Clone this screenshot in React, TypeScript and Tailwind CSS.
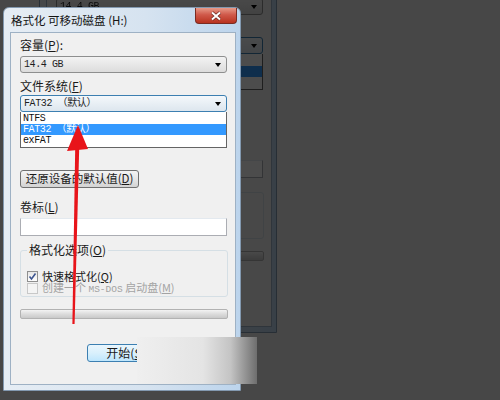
const ui = "font-['Noto_Sans_CJK_SC','Liberation_Sans',sans-serif]"
const mono = "font-['Liberation_Mono','Noto_Sans_CJK_SC',monospace]"

function DropArrow() {
  return <span className="w-0 h-0 border-x-[3.5px] border-x-transparent border-t-[4px] border-t-black" />
}

function ComboBox({ value, focused }: { value: string; focused?: boolean }) {
  return (
    <div
      className={`h-[17px] w-[207px] flex items-center justify-between pl-[3px] pr-[5px] rounded-[3px] border ${
        focused
          ? 'border-[#3c7fb1] bg-[linear-gradient(#f4f8fb,#dde6ee)]'
          : 'border-[#8e8f8f] bg-[linear-gradient(#f3f3f3,#dcdcdc)]'
      }`}
    >
      <span className={`${mono} text-[10px] leading-none tracking-[-0.4px] text-[#1e1e1e]`}>{value}</span>
      <DropArrow />
    </div>
  )
}

function ListItem({ label, selected }: { label: string; selected?: boolean }) {
  return (
    <div
      className={`h-[11px] flex items-center pl-[2px] ${mono} text-[10px] leading-none tracking-[-0.4px] ${
        selected ? 'bg-[#3399ff] text-white' : 'text-[#111]'
      }`}
    >
      {label}
    </div>
  )
}

function CheckBox({ checked, disabled }: { checked?: boolean; disabled?: boolean }) {
  return (
    <span
      className={`w-[11px] h-[11px] shrink-0 flex items-center justify-center border ${
        disabled ? 'border-[#c8c8c8] bg-[#f4f4f4]' : 'border-[#8f8f8f] bg-[linear-gradient(#e6e6e6,#ffffff)]'
      }`}
    >
      {checked && (
        <svg width="9" height="9" viewBox="0 0 9 9">
          <path d="M1.5 4.5 L3.5 7 L7.5 1.5" fill="none" stroke="#3d5590" strokeWidth="1.6" />
        </svg>
      )}
    </span>
  )
}

// `bare` draws only the frame and controls, for the window sitting behind
function FormatDialog({ bare }: { bare?: boolean }) {
  const t = (s: React.ReactNode) => (bare ? null : s)
  return (
    <div className="w-[238px] h-[384px] flex flex-col rounded-t-[6px] border border-[#8399b0] bg-[linear-gradient(to_right,#e6edf4,#d6e3f0_60%,#bcd4ec)]">
      {/* title bar */}
      <div className="h-[24px] flex items-start justify-between pl-[7px]">
        <span className={`${ui} mt-[5px] text-[11.5px] leading-[14px] text-[#141414]`}>{t('格式化 可移动磁盘 (H:)')}</span>
        <div className="w-[42px] h-[16px] mr-[3px] flex items-center justify-center rounded-b-[4px] border border-t-0 border-[#7a2b22] bg-[linear-gradient(#e79a88,#d0594a_45%,#b8321f)]">
          <svg width="12" height="10" viewBox="0 0 12 10">
            <path d="M2 1.5 L10 8.5 M10 1.5 L2 8.5" stroke="#6b2a22" strokeWidth="3.4" />
            <path d="M2 1.5 L10 8.5 M10 1.5 L2 8.5" stroke="#ffffff" strokeWidth="2" />
          </svg>
        </div>
      </div>

      {/* client area */}
      <div className={`${ui} flex-1 ml-[6px] mr-[4px] mb-[5px] border border-[#9eb1c4] bg-[#f0f0f0] pl-[9px] pt-[5px] text-[#1a1a1a]`}>
        <div className="h-[14px] text-[12px] leading-[14px]">{t(<>容量(<span className="underline">P</span>):</>)}</div>
        <div className="mt-[4px]">
          <ComboBox value="14.4 GB" />
        </div>

        <div className="mt-[6px] h-[14px] text-[12px] leading-[14px]">{t(<>文件系统(<span className="underline">F</span>)</>)}</div>
        <div className="mt-[2px]">
          <ComboBox value={bare ? '' : 'FAT32 （默认）'} focused />
        </div>
        <div className="w-[207px] h-[36px] border border-t-0 border-[#646464] bg-white pt-[1px]">
          <ListItem label={bare ? '' : 'NTFS'} />
          <ListItem label={bare ? '' : 'FAT32 （默认）'} selected />
          <ListItem label={bare ? '' : 'exFAT'} />
        </div>

        <button className="mt-[22px] h-[18px] w-[119px] flex items-center justify-center rounded-[3px] border border-[#707070] bg-[linear-gradient(#f4f4f4,#e6e6e6_50%,#d3d3d3)] text-[11.5px] leading-none text-[#1a1a1a]">
          {t(<>还原设备的默认值(<span className="underline">D</span>)</>)}
        </button>

        <div className="mt-[12px] h-[14px] text-[12px] leading-[14px]">{t(<>卷标(<span className="underline">L</span>)</>)}</div>
        <div className="mt-[4px] w-[207px] h-[18px] border border-[#abadb3] border-t-[#e3e9ef] bg-white" />

        <fieldset className="mt-[7px] w-[208px] h-[54px] rounded-[3px] border border-[#d5dfe5] pl-[6px] pt-[13px]">
          <legend className="px-[2px] h-[14px] text-[12px] leading-[14px]">
            {t(<>格式化选项(<span className="underline">O</span>)</>)}
          </legend>
          <div className="h-[12px] flex items-center gap-[4px] text-[11px] leading-[12px]">
            <CheckBox checked />
            <span className="leading-[12px]">{t(<>快速格式化(<span className="underline">Q</span>)</>)}</span>
          </div>
          <div className="h-[12px] flex items-center gap-[4px] text-[11px] leading-[12px] text-[#a3a3a3]">
            <CheckBox disabled />
            <span className="leading-[12px] whitespace-nowrap">
              {t(
                <>
                  创建一个 <span className={`${mono} text-[9.5px]`}>MS-DOS</span> 启动盘(<span className="underline">M</span>)
                </>
              )}
            </span>
          </div>
        </fieldset>

        <div className="mt-[12px] w-[208px] h-[10px] rounded-[2px] border border-[#b2b2b2] bg-[linear-gradient(#f3f3f3,#dcdcdc_50%,#c9c9c9)]" />

        <button className="mt-[25px] ml-[67px] h-[18px] w-[75px] flex items-center justify-center rounded-[3px] border border-[#3c7fb1] bg-[linear-gradient(#eaf6fd,#d9f0fc_50%,#bee6fd)] text-[12px] leading-none text-[#1a1a1a] pl-[3px]">
          {t(<>开始(<span className="underline">S</span>)</>)}
        </button>
      </div>
    </div>
  )
}

export default function App() {
  return (
    <div className="relative w-[500px] h-[400px] overflow-hidden bg-[#474747]">
      {/* dimmed window behind the active one */}
      <div className="absolute left-[39px] top-[-51px] brightness-[0.3]">
        <FormatDialog bare />
      </div>

      <div className="absolute left-[3px] top-[7px]">
        <FormatDialog />
      </div>

      {/* red pointer arrow */}
      <svg className="absolute inset-0 pointer-events-none" width="500" height="400" viewBox="0 0 500 400">
        <polygon points="75.2,148 79.2,148 74.6,324 72.4,324" fill="#e8141a" />
        <polygon points="78,125 67,151 88,149" fill="#e8141a" />
      </svg>

      {/* grey fade patch */}
      <div className="absolute left-[137px] top-[337px] w-[120px] h-[47px] bg-[linear-gradient(to_right,#efefef_0%,#e4e4e4_55%,#c4c4c4_78%,#6e6e6e_100%)]" />
    </div>
  )
}
